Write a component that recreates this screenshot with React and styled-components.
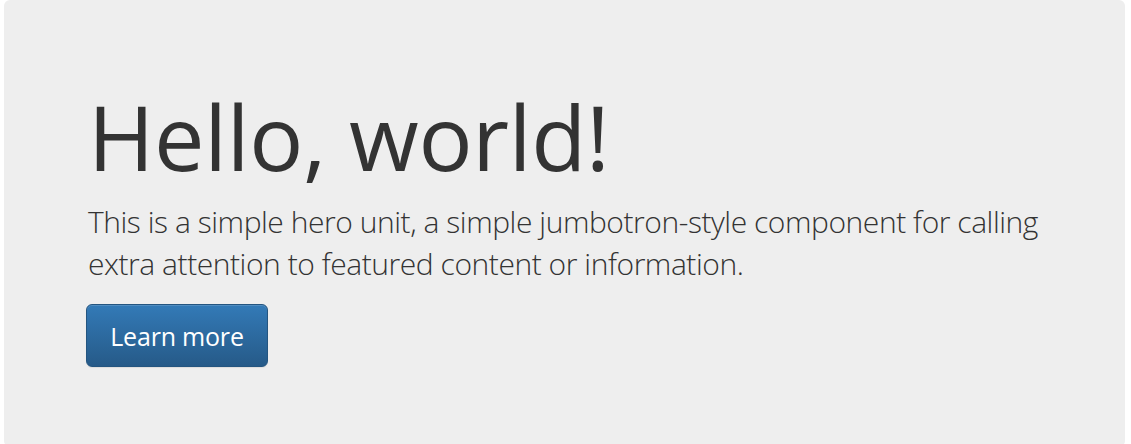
import styled, { createGlobalStyle } from "styled-components"

const GlobalStyle = createGlobalStyle`
  html, body {
    margin: 0;
    padding: 0;
    background: #fff;
  }

  body {
    font-family: "Open Sans", "Liberation Sans", sans-serif;
    color: #333;
  }
`

const Page = styled.div`
  padding: 0 6px 0 4px;
`

const Jumbotron = styled.div`
  background-color: #eee;
  border-radius: 6px;
  padding: 87px 80px 80px 84px;
  min-height: 444px;
  box-sizing: border-box;
`

const Title = styled.h1`
  margin: 0;
  font-size: 90px;
  font-weight: 400;
  line-height: 1.1;
  color: #333;
  letter-spacing: -0.3px;
`

const Lead = styled.p`
  margin: 15px 0 19px;
  font-size: 30px;
  font-weight: 300;
  line-height: 42px;
  color: #333;
  letter-spacing: -0.45px;
  max-width: 965px;
`

const Button = styled.a`
  display: inline-flex;
  align-items: center;
  justify-content: center;
  width: 182px;
  height: 63px;
  margin-left: -2px;
  box-sizing: border-box;
  border: 1px solid #245580;
  border-radius: 6px;
  background-image: linear-gradient(to bottom, #337ab7 0, #265a88 100%);
  box-shadow: inset 0 1px 0 rgba(255, 255, 255, 0.15), 0 1px 1px rgba(0, 0, 0, 0.075);
  color: #fff;
  font-size: 25px;
  letter-spacing: -0.2px;
  text-decoration: none;
  cursor: pointer;
`

export default function App() {
  return (
    <Page>
      <GlobalStyle />
      <Jumbotron>
        <Title>Hello, world!</Title>
        <Lead>
          This is a simple hero unit, a simple jumbotron-style component for calling
          extra attention to featured content or information.
        </Lead>
        <Button href="#">Learn more</Button>
      </Jumbotron>
    </Page>
  )
}
